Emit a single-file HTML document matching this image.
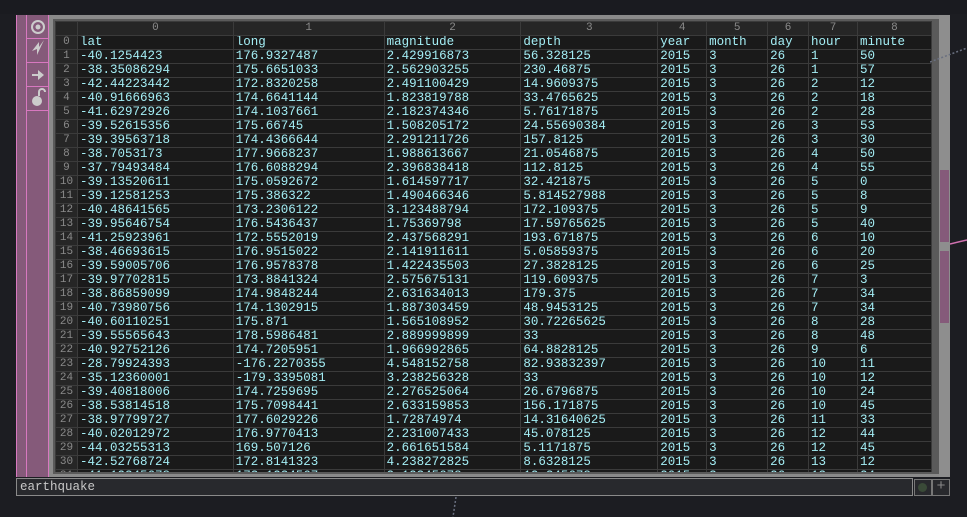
<!DOCTYPE html><html><head><style>
body{margin:0;width:967px;height:517px;background:#1c1d22;position:relative;overflow:hidden;font-family:"Liberation Mono",monospace}
.a{position:absolute}
table{border-collapse:collapse;table-layout:fixed;position:absolute;left:0;top:0}
td{border:1px solid #3b3b3b;height:13px;padding:0 0 0 2px;font-size:12.5px;line-height:13px;color:#a4eef5;background:#1a1a1a;white-space:nowrap;overflow:hidden}
tr.h td{background:#262626;color:#8a8a8a;font-size:11px;text-align:center;height:12px;padding:0}
td.i{background:#262626;color:#8a8a8a;font-size:11px;text-align:center;padding:0}
</style></head><body>
<div class="a" style="left:0;top:0;width:967px;height:14px;background:#1a1b20"></div>
<div class="a" style="left:16px;top:15px;width:934px;height:462px;background:#8a8a8a"></div>
<div class="a" style="left:16px;top:15px;width:33px;height:462px;background:#855a7a;box-sizing:border-box;border-left:1px solid #d878c0"></div>
<div class="a" style="left:26px;top:15px;width:1px;height:462px;background:#d878c0"></div>
<div class="a" style="left:48px;top:15px;width:1px;height:462px;background:#d878c0"></div>
<div class="a" style="left:27px;top:38px;width:21px;height:1px;background:#d878c0"></div>
<div class="a" style="left:27px;top:62px;width:21px;height:1px;background:#d878c0"></div>
<div class="a" style="left:27px;top:86px;width:21px;height:1px;background:#d878c0"></div>
<div class="a" style="left:27px;top:110px;width:21px;height:1px;background:#d878c0"></div>
<svg class="a" style="left:27px;top:16px" width="21" height="95"><circle cx="11" cy="11" r="6" fill="none" stroke="#ccc" stroke-width="2"/><circle cx="11" cy="11" r="2.5" fill="#ccc"/><path d="M5 35 L12 26 L12 31 L17 24 L10 39 L10 33 Z" fill="#ccc"/><path d="M5 58 H11 V54 L17 59 L11 64 V60 H5Z" fill="#ccc"/><circle cx="10" cy="85" r="5" fill="#ccc"/><path d="M12 80 V76 A3 3 0 0 1 18 76" fill="none" stroke="#ccc" stroke-width="2"/></svg>
<div class="a" style="left:53px;top:19px;width:886px;height:455px;background:#5a5a5a"></div>
<div class="a" style="left:55px;top:21px;width:877px;height:451px;background:#1a1a1a;overflow:hidden">
<table>
<colgroup><col style="width:22px"><col style="width:156px"><col style="width:151px"><col style="width:137px"><col style="width:137px"><col style="width:49px"><col style="width:61px"><col style="width:41px"><col style="width:49px"><col style="width:74px"></colgroup>
<tr class="h"><td></td><td>0</td><td>1</td><td>2</td><td>3</td><td>4</td><td>5</td><td>6</td><td>7</td><td>8</td></tr>
<tr><td class="i">0</td><td>lat</td><td>long</td><td>magnitude</td><td>depth</td><td>year</td><td>month</td><td>day</td><td>hour</td><td>minute</td></tr>
<tr><td class="i">1</td><td>-40.1254423</td><td>176.9327487</td><td>2.429916873</td><td>56.328125</td><td>2015</td><td>3</td><td>26</td><td>1</td><td>50</td></tr>
<tr><td class="i">2</td><td>-38.35086294</td><td>175.6651033</td><td>2.562903255</td><td>230.46875</td><td>2015</td><td>3</td><td>26</td><td>1</td><td>57</td></tr>
<tr><td class="i">3</td><td>-42.44223442</td><td>172.8320258</td><td>2.491100429</td><td>14.9609375</td><td>2015</td><td>3</td><td>26</td><td>2</td><td>12</td></tr>
<tr><td class="i">4</td><td>-40.91666963</td><td>174.6641144</td><td>1.823819788</td><td>33.4765625</td><td>2015</td><td>3</td><td>26</td><td>2</td><td>18</td></tr>
<tr><td class="i">5</td><td>-41.62972926</td><td>174.1037661</td><td>2.182374346</td><td>5.76171875</td><td>2015</td><td>3</td><td>26</td><td>2</td><td>28</td></tr>
<tr><td class="i">6</td><td>-39.52615356</td><td>175.66745</td><td>1.508205172</td><td>24.55690384</td><td>2015</td><td>3</td><td>26</td><td>3</td><td>53</td></tr>
<tr><td class="i">7</td><td>-39.39563718</td><td>174.4366644</td><td>2.291211726</td><td>157.8125</td><td>2015</td><td>3</td><td>26</td><td>3</td><td>30</td></tr>
<tr><td class="i">8</td><td>-38.7053173</td><td>177.9668237</td><td>1.988613667</td><td>21.0546875</td><td>2015</td><td>3</td><td>26</td><td>4</td><td>50</td></tr>
<tr><td class="i">9</td><td>-37.79493484</td><td>176.6088294</td><td>2.396838418</td><td>112.8125</td><td>2015</td><td>3</td><td>26</td><td>4</td><td>55</td></tr>
<tr><td class="i">10</td><td>-39.13520611</td><td>175.0592672</td><td>1.614597717</td><td>32.421875</td><td>2015</td><td>3</td><td>26</td><td>5</td><td>0</td></tr>
<tr><td class="i">11</td><td>-39.12581253</td><td>175.386322</td><td>1.490466346</td><td>5.814527988</td><td>2015</td><td>3</td><td>26</td><td>5</td><td>8</td></tr>
<tr><td class="i">12</td><td>-40.48641565</td><td>173.2306122</td><td>3.123488794</td><td>172.109375</td><td>2015</td><td>3</td><td>26</td><td>5</td><td>9</td></tr>
<tr><td class="i">13</td><td>-39.95646754</td><td>176.5436437</td><td>1.75369798</td><td>17.59765625</td><td>2015</td><td>3</td><td>26</td><td>5</td><td>40</td></tr>
<tr><td class="i">14</td><td>-41.25923961</td><td>172.5552019</td><td>2.437568291</td><td>193.671875</td><td>2015</td><td>3</td><td>26</td><td>6</td><td>10</td></tr>
<tr><td class="i">15</td><td>-38.46693615</td><td>176.9515022</td><td>2.141911611</td><td>5.05859375</td><td>2015</td><td>3</td><td>26</td><td>6</td><td>20</td></tr>
<tr><td class="i">16</td><td>-39.59005706</td><td>176.9578378</td><td>1.422435503</td><td>27.3828125</td><td>2015</td><td>3</td><td>26</td><td>6</td><td>25</td></tr>
<tr><td class="i">17</td><td>-39.97702815</td><td>173.8841324</td><td>2.575675131</td><td>119.609375</td><td>2015</td><td>3</td><td>26</td><td>7</td><td>3</td></tr>
<tr><td class="i">18</td><td>-38.86859099</td><td>174.9848244</td><td>2.631634013</td><td>179.375</td><td>2015</td><td>3</td><td>26</td><td>7</td><td>34</td></tr>
<tr><td class="i">19</td><td>-40.73980756</td><td>174.1302915</td><td>1.887303459</td><td>48.9453125</td><td>2015</td><td>3</td><td>26</td><td>7</td><td>34</td></tr>
<tr><td class="i">20</td><td>-40.60110251</td><td>175.871</td><td>1.565108952</td><td>30.72265625</td><td>2015</td><td>3</td><td>26</td><td>8</td><td>28</td></tr>
<tr><td class="i">21</td><td>-39.55565643</td><td>178.5986481</td><td>2.889999899</td><td>33</td><td>2015</td><td>3</td><td>26</td><td>8</td><td>48</td></tr>
<tr><td class="i">22</td><td>-40.92752126</td><td>174.7205951</td><td>1.966992865</td><td>64.8828125</td><td>2015</td><td>3</td><td>26</td><td>9</td><td>6</td></tr>
<tr><td class="i">23</td><td>-28.79924393</td><td>-176.2270355</td><td>4.548152758</td><td>82.93832397</td><td>2015</td><td>3</td><td>26</td><td>10</td><td>11</td></tr>
<tr><td class="i">24</td><td>-35.12360001</td><td>-179.3395081</td><td>3.238256328</td><td>33</td><td>2015</td><td>3</td><td>26</td><td>10</td><td>12</td></tr>
<tr><td class="i">25</td><td>-39.40818006</td><td>174.7259695</td><td>2.276525064</td><td>26.6796875</td><td>2015</td><td>3</td><td>26</td><td>10</td><td>24</td></tr>
<tr><td class="i">26</td><td>-38.53814518</td><td>175.7098441</td><td>2.633159853</td><td>156.171875</td><td>2015</td><td>3</td><td>26</td><td>10</td><td>45</td></tr>
<tr><td class="i">27</td><td>-38.97799727</td><td>177.6029226</td><td>1.72874974</td><td>14.31640625</td><td>2015</td><td>3</td><td>26</td><td>11</td><td>33</td></tr>
<tr><td class="i">28</td><td>-40.02012972</td><td>176.9770413</td><td>2.231007433</td><td>45.078125</td><td>2015</td><td>3</td><td>26</td><td>12</td><td>44</td></tr>
<tr><td class="i">29</td><td>-44.03255313</td><td>169.507126</td><td>2.661651584</td><td>5.1171875</td><td>2015</td><td>3</td><td>26</td><td>12</td><td>45</td></tr>
<tr><td class="i">30</td><td>-42.52768724</td><td>172.8141323</td><td>4.238272825</td><td>8.6328125</td><td>2015</td><td>3</td><td>26</td><td>13</td><td>12</td></tr>
<tr><td class="i">31</td><td>-41.12345678</td><td>173.1234567</td><td>2.12345678</td><td>12.345678</td><td>2015</td><td>3</td><td>26</td><td>13</td><td>24</td></tr>
</table></div>
<div class="a" style="left:939px;top:15px;width:11px;height:462px;background:#8e8e8e"></div>
<div class="a" style="left:940px;top:170px;width:9px;height:72px;background:#855a7a"></div>
<div class="a" style="left:940px;top:251px;width:9px;height:72px;background:#855a7a"></div>
<svg class="a" style="left:950px;top:230px" width="17" height="20"><path d="M0 14 Q8 12 17 10" stroke="#d070b0" stroke-width="1.5" fill="none"/></svg>
<svg class="a" style="left:930px;top:40px" width="37" height="25"><path d="M0 22 L37 8" stroke="#6a7080" stroke-width="1.5" stroke-dasharray="2 2" fill="none"/></svg>
<div class="a" style="left:16px;top:478px;width:897px;height:18px;background:#28292d;border:1px solid #8a8a8a;box-sizing:border-box;color:#c8c8c8;font-size:12.5px;line-height:16px;padding-left:3px">earthquake</div>
<div class="a" style="left:914px;top:479px;width:18px;height:17px;background:#28292d;border:1px solid #777;box-sizing:border-box"></div>
<div class="a" style="left:918px;top:483px;width:9px;height:9px;border-radius:50%;background:#3a4a38"></div>
<div class="a" style="left:932px;top:479px;width:18px;height:17px;background:#28292d;border:1px solid #777;box-sizing:border-box;color:#888;font-size:15px;line-height:14px;text-align:center">+</div>
<svg class="a" style="left:450px;top:497px" width="10" height="20"><path d="M6 0 L3 20" stroke="#6a7080" stroke-width="1.5" stroke-dasharray="2 2"/></svg>
</body></html>
